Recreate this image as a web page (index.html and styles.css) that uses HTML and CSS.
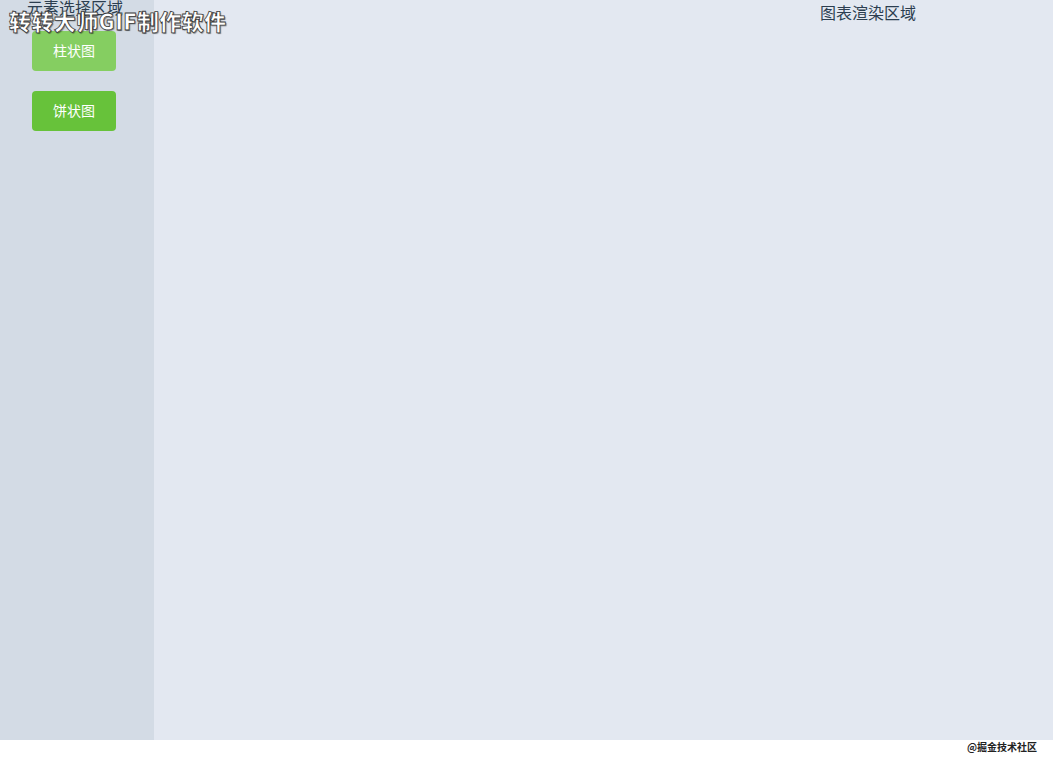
FILE: index.html
```html
<!DOCTYPE html>
<html lang="zh">
<head>
<meta charset="utf-8">
<link rel="stylesheet" href="styles.css">
</head>
<body>
<div class="app">
  <aside class="side">
    <div class="side-title">元素选择区域</div>
    <div class="btns">
      <button class="btn btn-light">柱状图</button>
      <button class="btn">饼状图</button>
    </div>
  </aside>
  <main class="main">
    <div class="main-title">图表渲染区域</div>
  </main>
</div>
<footer class="foot"><span class="juejin">@掘金技术社区</span></footer>
<div class="wm">转转大师GIF制作软件</div>
</body>
</html>
```
FILE: styles.css
```css
html, body { margin: 0; padding: 0; }
body {
  width: 1053px;
  height: 767px;
  overflow: hidden;
  background: #fff;
  font-family: "Microsoft YaHei", "Noto Sans CJK SC", sans-serif;
  position: relative;
}
.app {
  display: flex;
  height: 740px;
}
.side {
  width: 154px;
  background: #d3dbe5;
  box-sizing: border-box;
}
.side-title {
  font-size: 16px;
  line-height: 14px;
  padding-left: 27px;
  color: #2c3e50;
  height: 16px;
}
.btns {
  display: flex;
  flex-direction: column;
  gap: 20px;
  padding-left: 32px;
  margin-top: 15px;
}
.btn {
  width: 84px;
  height: 40px;
  border: none;
  border-radius: 4px;
  background: #67c23a;
  color: #fff;
  font-family: inherit;
  font-size: 14px;
  padding: 0 0 2px;
}
.btn-light { background: #85ce61; }
.main {
  flex: 1;
  background: #e3e8f1;
  padding-left: 666px;
}
.main-title {
  font-size: 16px;
  line-height: 24px;
  color: #2c3e50;
}
.foot {
  height: 27px;
  display: flex;
  justify-content: flex-end;
  padding-right: 16px;
}
.juejin {
  font-size: 10px;
  font-weight: bold;
  color: #222;
  line-height: 14px;
}
.wm {
  position: absolute;
  left: 9px;
  top: 5px;
  font-size: 22px;
  font-weight: 900;
  color: #fff;
  letter-spacing: 0.4px;
  line-height: 30px;
  -webkit-text-stroke: 0.8px #3a3a3a;
  text-shadow: 1px 1px 1px rgba(0,0,0,0.45);
}
```
